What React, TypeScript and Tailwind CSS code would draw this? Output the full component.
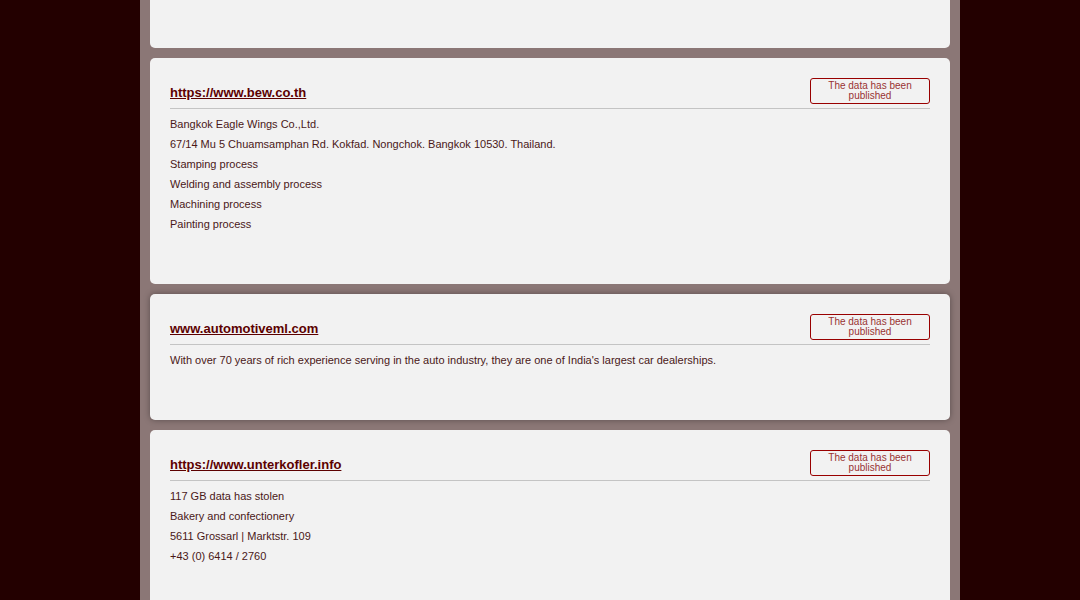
const cards = [
  {
    url: "https://www.bew.co.th",
    lines: [
      "Bangkok Eagle Wings Co.,Ltd.",
      "67/14 Mu 5 Chuamsamphan Rd. Kokfad. Nongchok. Bangkok 10530. Thailand.",
      "Stamping process",
      "Welding and assembly process",
      "Machining process",
      "Painting process",
    ],
  },
  {
    url: "www.automotiveml.com",
    shadow: true,
    lines: [
      "With over 70 years of rich experience serving in the auto industry, they are one of India's largest car dealerships.",
    ],
  },
  {
    url: "https://www.unterkofler.info",
    lines: [
      "117 GB data has stolen",
      "Bakery and confectionery",
      "5611 Grossarl | Marktstr. 109",
      "+43 (0) 6414 / 2760",
    ],
  },
];

function Card({ url, lines, shadow }: { url: string; lines: string[]; shadow?: boolean }) {
  return (
    <div
      className={`rounded-[5px] bg-[#f2f2f2] px-5 pt-5 pb-[50px] ${
        shadow ? "shadow-[0_0_6px_rgba(0,0,0,0.35)]" : ""
      }`}
    >
      <div className="flex items-end justify-between border-b border-[#c4c4c4] pb-1">
        <a className="pb-[4px] text-[13px] font-bold leading-[15px] text-[#5c0000] underline">{url}</a>
        <div className="flex h-[26px] w-[120px] flex-col items-center justify-center rounded-[3px] border border-[#990000] text-center text-[10px] leading-[10px] text-[#993333]">
          <span>The data has been</span>
          <span>published</span>
        </div>
      </div>
      <div className="pt-[5px]">
        {lines.map((l) => (
          <p key={l} className="text-[11px] leading-[20px] text-[#4a1818]">
            {l}
          </p>
        ))}
      </div>
    </div>
  );
}

export default function App() {
  return (
    <div
      className="flex h-[600px] overflow-hidden bg-[#230000]"
      style={{ fontFamily: '"Liberation Sans", Arial, sans-serif' }}
    >
      <div className="ml-[140px] flex w-[820px] flex-col gap-[10px] bg-[#8b7776] px-[10px]">
        <div className="h-[48px] shrink-0 rounded-b-[5px] bg-[#f2f2f2]" />
        {cards.map((c) => (
          <Card key={c.url} {...c} />
        ))}
      </div>
    </div>
  );
}
